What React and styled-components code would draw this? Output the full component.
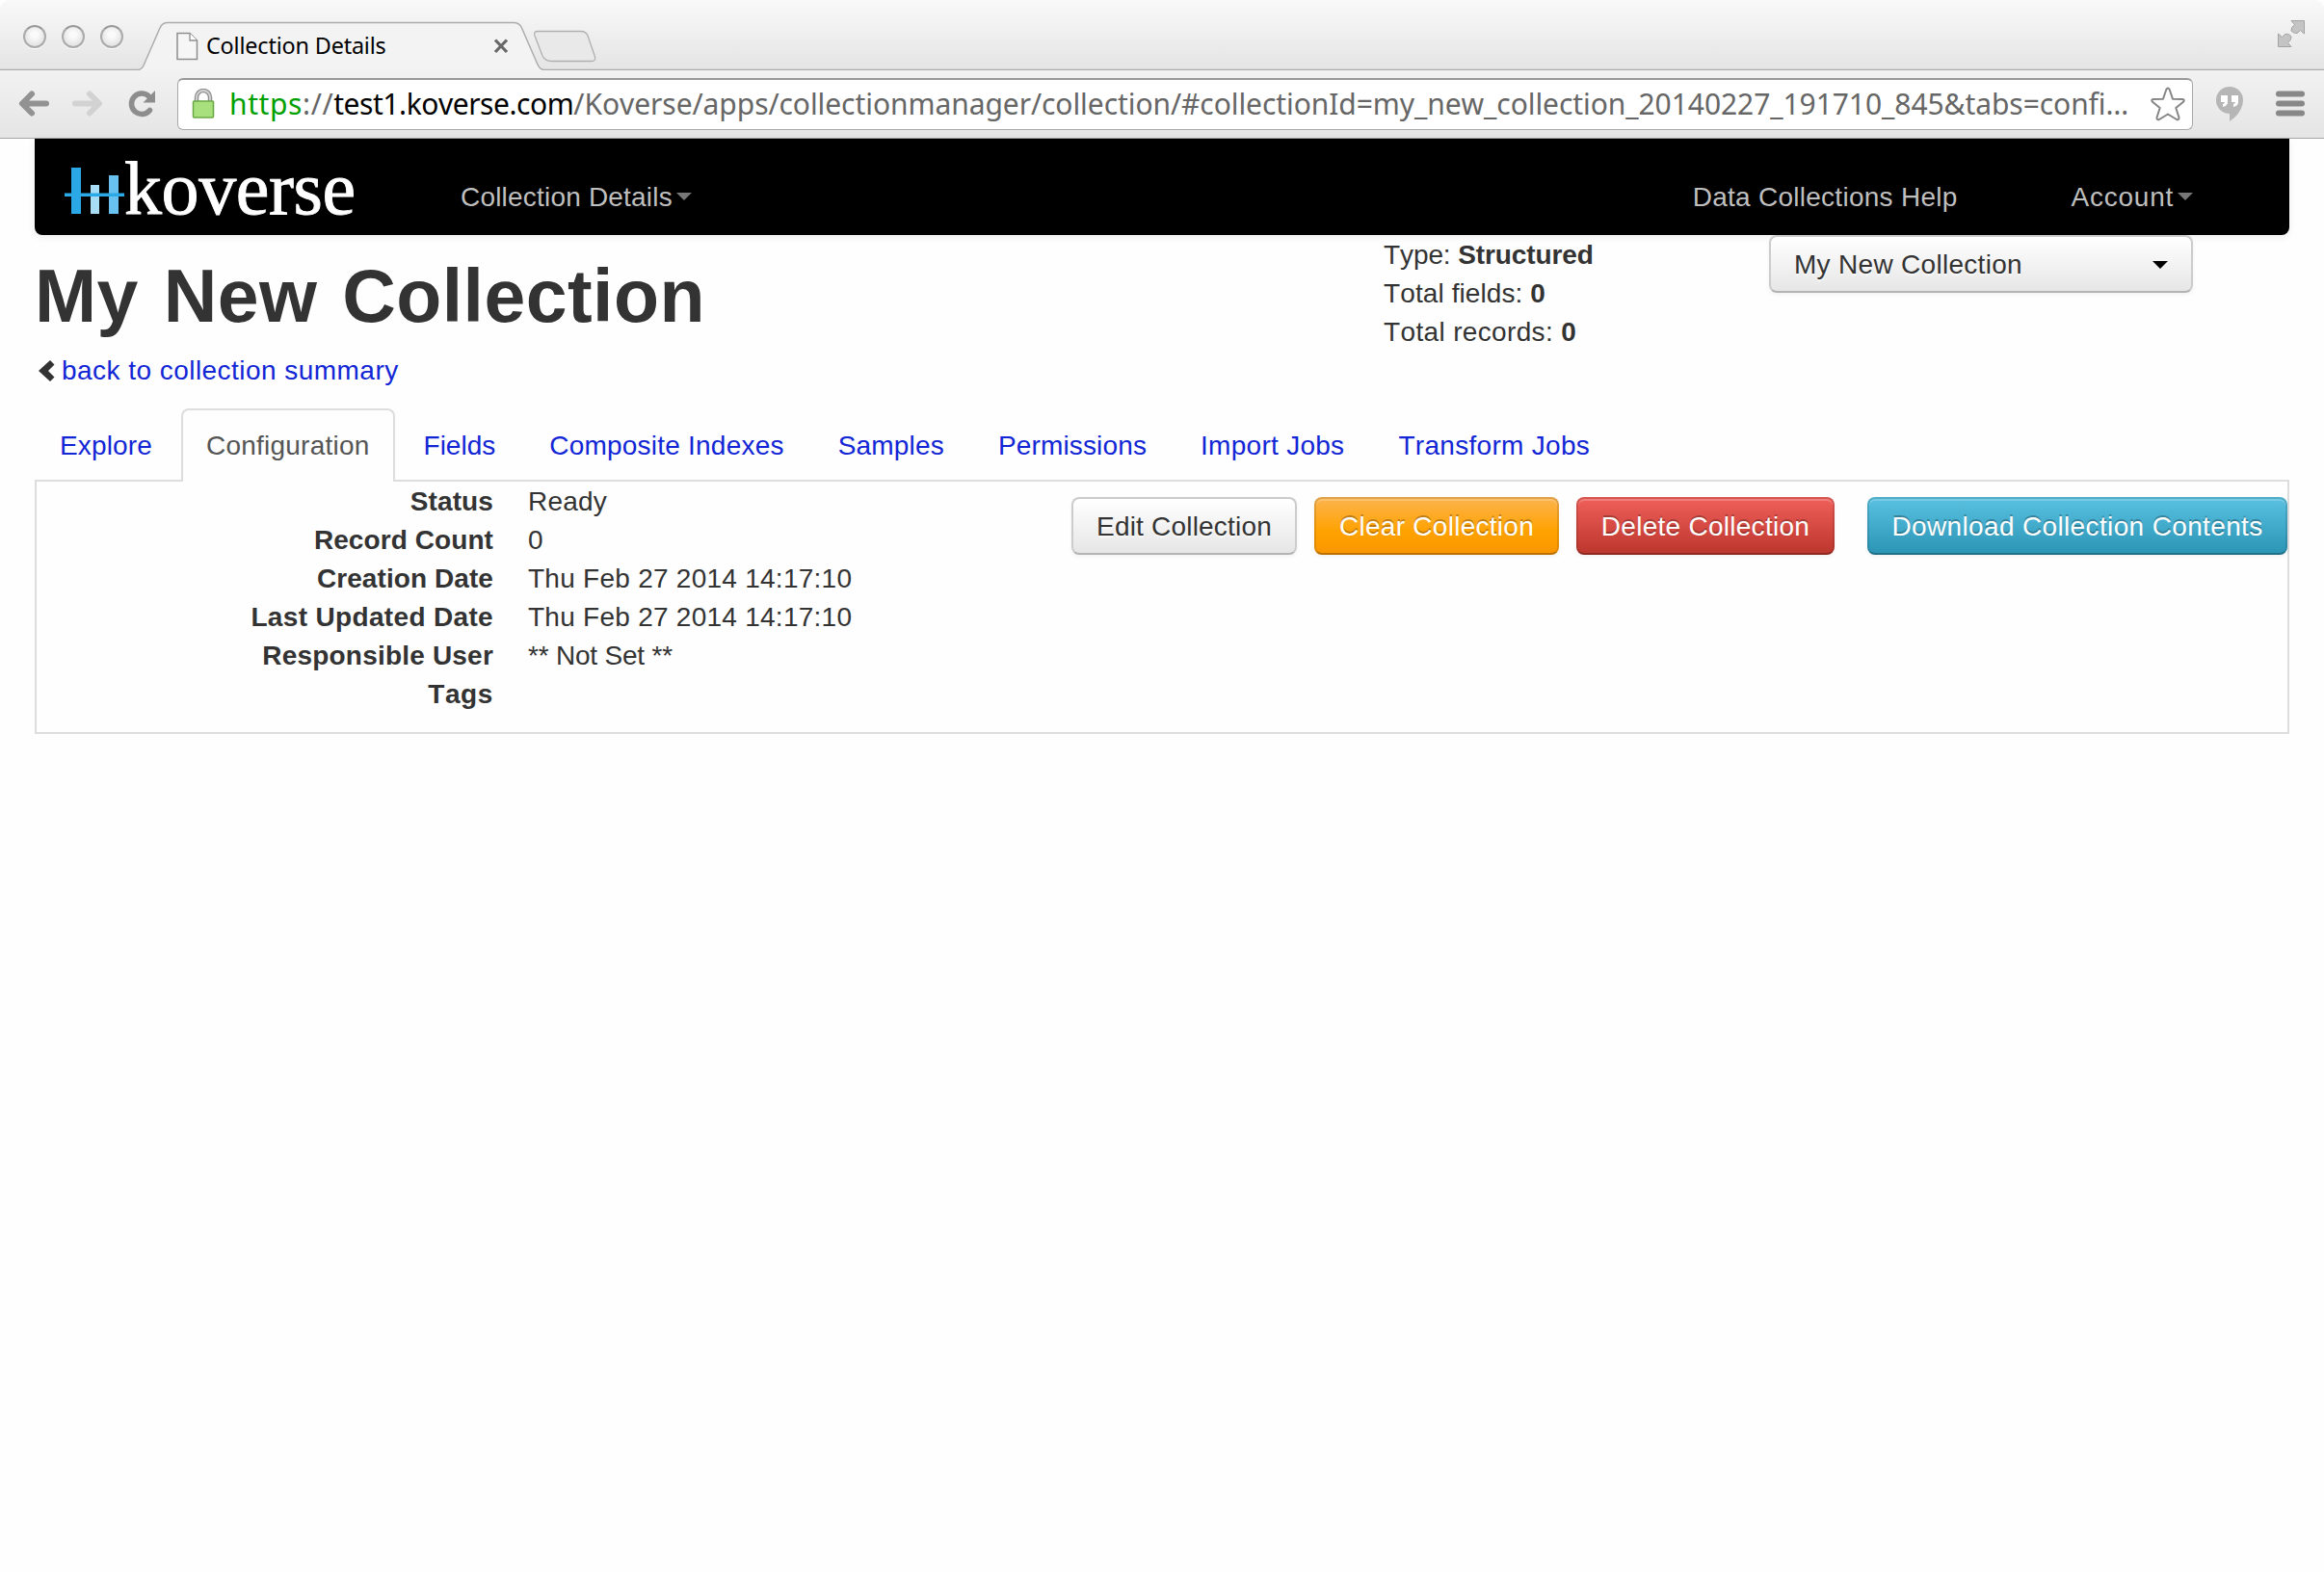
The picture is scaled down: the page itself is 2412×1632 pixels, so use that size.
import React from "react";
import styled, { createGlobalStyle, css } from "styled-components";

const Global = createGlobalStyle`
  * { box-sizing: border-box; }
  html, body { margin: 0; background: #fff; }
  body { font: 28px/40px "Liberation Sans", Arial, sans-serif; color: #333; overflow: hidden; font-kerning: none; }
`;

const Window = styled.div`
  width: 2412px;
  height: 1632px;
  background: #fefefe;
`;

const Tracked = styled.span`
  letter-spacing: ${(p) => p.$track}px;
`;

const Chrome = styled.header`
  height: 144px;
  border-radius: 10px 10px 0 0;
  border-bottom: 1px solid #a5a5a5;
  background: linear-gradient(#f2f2f2 72px, #e5e5e5 143px);
  font-family: "Noto Sans", "Open Sans", sans-serif;
`;

const TitleBar = styled.div`
  position: relative;
  height: 73px;
  display: flex;
  align-items: flex-start;
  border-radius: 10px 10px 0 0;
  background: linear-gradient(#f9f9f9, #e4e4e4);
`;

const TabShape = styled.svg`
  position: absolute;
  left: 0;
  top: 0;
`;

const Lights = styled.div`
  display: flex;
  gap: 16px;
  padding: 26px 0 0 24px;
  width: 183px;
`;

const Light = styled.i`
  width: 24px;
  height: 24px;
  border-radius: 50%;
  border: 2px solid #aaa;
  border-top-color: #999;
  background: radial-gradient(circle at 50% 40%, #fafafa 20%, #e2e2e2 75%);
  box-shadow: 0 1px 0 #fff;
`;

const TabLabel = styled.div`
  position: relative;
  display: flex;
  width: 345px;
  padding-top: 33px;
  svg { flex: none; }
`;

const TabTitle = styled.span`
  flex: 1;
  margin-left: 8px;
  margin-top: -1px;
  font-size: 23.4px;
  line-height: 30px;
  letter-spacing: -0.17px;
  color: #000;
  white-space: nowrap;
`;

const FullScreen = styled.svg`
  position: relative;
  margin: 20px 19px 0 auto;
`;

const Toolbar = styled.div`
  height: 69px;
  display: flex;
  align-items: center;
  padding: 0 19px 0 18px;
`;

const Omnibox = styled.div`
  display: flex;
  align-items: center;
  width: 2092px;
  height: 54px;
  margin: 0 22px 0 19px;
  padding: 0 6px 0 14px;
  background: #fff;
  border: 1px solid #a9a9a9;
  border-top: 2px solid #999;
  border-radius: 6px;
`;

const Url = styled.span`
  flex: 1;
  margin-left: 15px;
  font-size: 30px;
  line-height: 48px;
  white-space: nowrap;
  color: #666;
  letter-spacing: -0.07px;
  b { font-weight: 400; color: #000; letter-spacing: -0.45px; }
  em { font-style: normal; color: #00a000; }
`;

const Page = styled.main`
  padding: 0 36px;
`;

const Navbar = styled.nav`
  display: flex;
  height: 100px;
  padding: 0 100px 0 30px;
  background: #000;
  border-radius: 0 0 8px 8px;
  box-shadow: 0 2px 8px rgba(0, 0, 0, 0.07);
`;

const Brand = styled.div`
  display: flex;
  width: 412px;
`;

const BrandName = styled.span`
  margin-left: -1px;
  font: 78px/100px "Liberation Serif", serif;
  color: #fff;
  -webkit-text-stroke: 0.9px #fff;
  margin-top: 2px;
  letter-spacing: -0.4px;
`;

const NavItem = styled.a`
  display: flex;
  align-items: center;
  height: 40px;
  margin-top: 41px;
  color: #bfbfbf;
  white-space: nowrap;
  ${(p) => p.$push && css`margin-left: auto; margin-right: 118px;`}
`;

const Caret = styled.i`
  width: 16px;
  height: 8px;
  margin-left: ${(p) => p.$gap || 0}px;
  margin-top: ${(p) => p.$gap ? -2 : 0}px;
  background: ${(p) => p.$color};
  clip-path: polygon(0 0, 100% 0, 50% 100%);
`;

const Head = styled.section`
  display: flex;
  height: 180px;
`;

const HeadMain = styled.div`
  width: 1400px;
`;

const Title = styled.h1`
  margin: 23px 0 18px;
  font-size: 77px;
  line-height: 80px;
  letter-spacing: 0.45px;
  word-spacing: 4px;
`;

const BackLink = styled.a`
  display: flex;
  align-items: center;
  color: #1226d6;
  letter-spacing: 0.46px;
  svg { margin: 0 7px 0 4px; }
`;

const Meta = styled.div`
  width: 400px;
  padding-top: 1px;
`;

const buttonFace = css`
  display: flex;
  align-items: center;
  height: 60px;
  padding: 2px 24px 0;
  border: 2px solid #ccc;
  border-bottom-color: #b3b3b3;
  border-radius: 8px;
  background: linear-gradient(#fff, #e6e6e6);
  box-shadow: inset 0 2px 0 rgba(255, 255, 255, 0.2), 0 2px 4px rgba(0, 0, 0, 0.05);
  color: #333;
  text-shadow: 0 2px 2px rgba(255, 255, 255, 0.75);
  font: 28px/40px "Liberation Sans", Arial, sans-serif;
  font-kerning: none;
  white-space: nowrap;
`;

const Picker = styled.button`
  ${buttonFace}
  width: 440px;
  justify-content: space-between;
  letter-spacing: 0.3px;
`;

const tones = {
  warning: ["#fbb450", "#ffa200 60%, #f99500"],
  danger: ["#f0605b", "#bb352c"],
  info: ["#5ac1e1", "#2a94b4"],
};

const Button = styled.button`
  ${buttonFace}
  justify-content: center;
  width: ${(p) => p.$width}px;
  padding-left: 0;
  padding-right: 0;
  letter-spacing: ${(p) => p.$track}px;
  ${(p) => tones[p.$tone] && css`
    color: #fff;
    text-shadow: 0 -2px 0 rgba(0, 0, 0, 0.25);
    border-color: rgba(0, 0, 0, 0.1) rgba(0, 0, 0, 0.1) rgba(0, 0, 0, 0.25);
    background: linear-gradient(${tones[p.$tone].join(", ")}) border-box;
  `}
`;

const Tabs = styled.div`
  display: flex;
  gap: 4px;
  height: 76px;
`;

const Tab = styled.a`
  height: 76px;
  padding: 17px 24px 0;
  border: 2px solid transparent;
  border-bottom: 0;
  border-radius: 8px 8px 0 0;
  color: #1226d6;
  white-space: nowrap;
  letter-spacing: ${(p) => p.$track}px;
  ${(p) => p.$active && css`
    position: relative;
    color: #555;
    background: #fefefe;
    border-color: #ddd;
  `}
`;

const Panel = styled.section`
  display: flex;
  justify-content: space-between;
  height: 264px;
  margin-top: -2px;
  border: 2px solid #ddd;
`;

const Details = styled.dl`
  display: grid;
  grid-template-columns: 474px auto;
  grid-auto-rows: 40px;
  column-gap: 36px;
  margin: 0;
  padding-top: 1px;
  dt { font-weight: 700; text-align: right; }
  dd { margin: 0; }
`;

const Actions = styled.div`
  display: flex;
  gap: 18px;
  align-items: flex-start;
  padding-top: 16px;
  ${Button}:last-child { margin-left: 16px; }
`;

const tabs = [
  ["Explore", 0.15],
  ["Configuration", 0.23],
  ["Fields", 0],
  ["Composite Indexes", 0.22],
  ["Samples", 0.2],
  ["Permissions", 0.14],
  ["Import Jobs", 0.28],
  ["Transform Jobs", 0.3],
];

const details = [
  ["Status", 0.1, "Ready", 0.2],
  ["Record Count", 0.08, "0", 0],
  ["Creation Date", 0.08, "Thu Feb 27 2014 14:17:10", 0.26],
  ["Last Updated Date", 0.34, "Thu Feb 27 2014 14:17:10", 0.26],
  ["Responsible User", 0.2, "** Not Set **", -0.2],
  ["Tags", 0.6, "", 0],
];

const Arrow = ({ color, flip, left }) => (
  <svg width="34" height="36" viewBox="0 0 34 36" style={{ marginLeft: left }}>
    <g transform={flip ? "translate(34 0) scale(-1 1)" : undefined} fill="none" stroke={color} strokeWidth="6" strokeLinecap="round" strokeLinejoin="round">
      <path d="M15 7.500 5 17.500l10 10M6 17.500h24" />
    </g>
  </svg>
);

const BrowserChrome = () => (
  <Chrome>
    <TitleBar>
      <TabShape width="2412" height="73">
        <path d="M0 72.5H143Q147 72.5 149 68L166 29Q168.500 23.500 174 23.500H533Q539 23.500 541.500 29L558 67Q560.500 72.500 565 72.500H2412V74H0Z" fill="#f3f3f3" />
        <path d="M0 72.500H143Q147 72.500 149 68L166 29Q168.500 23.500 174 23.500H533Q539 23.500 541.500 29L558 67Q560.500 72.500 565 72.500H2412" fill="none" stroke="#acacac" strokeWidth="1.500" />
        <path d="M558 32.500H603Q608 32.500 610 37L617.500 59Q618.500 63.500 614 63.500H572Q566 63.500 563 58L555 37Q553.500 32.500 558 32.500Z" fill="#e9e9e9" stroke="#b0b0b0" strokeWidth="1.300" />
      </TabShape>
      <Lights><Light /><Light /><Light /></Lights>
      <TabLabel>
        <svg width="23" height="30" viewBox="0 0 23 30">
          <path d="M1 1.500H14L21.500 9V28.500H1Z" fill="#f6f6f6" stroke="#8e8e8e" strokeWidth="1.500" />
          <path d="M14 1.500V9H21.500" fill="#fff" stroke="#8e8e8e" strokeWidth="1.300" />
        </svg>
        <TabTitle>Collection Details</TabTitle>
        <svg width="16" height="30" viewBox="0 0 16 30">
          <path d="M2 8.500 14 21M14 8.500 2 21" stroke="#686868" strokeWidth="3.200" />
        </svg>
      </TabLabel>
      <FullScreen width="30" height="30" viewBox="0 0 30 30" fill="#c4c4c4" stroke="#a3a3a3" strokeWidth="1">
        <path d="M15 1.500H28.500V15L24.500 11.500 21 14.500Q17 14.500 15 12Q14.500 9 18.500 5.500Z" />
        <path d="M1.500 15 5.500 18.500 8.500 15.500Q13 14.500 15 18Q15.500 21 11.500 24.500L15 28.500H1.500Z" />
      </FullScreen>
    </TitleBar>
    <Toolbar>
      <Arrow color="#929292" />
      <Arrow color="#d2d2d2" flip left={22} />
      <svg width="36" height="36" viewBox="0 0 36 36" style={{ marginLeft: 21 }}>
        <path d="M26.500 24.500A10.700 10.700 0 1 1 25.500 10" fill="none" stroke="#8d8d8d" strokeWidth="5.500" strokeLinecap="round" />
        <path d="M32 4V16.500H19.500Z" fill="#8d8d8d" />
      </svg>
      <Omnibox>
        <svg width="24" height="32" viewBox="0 0 24 32">
          <path d="M5 14V9a7 7 0 0 1 14 0V14" fill="none" stroke="#8f8f8f" strokeWidth="4.500" />
          <path d="M5 14V9a7 7 0 0 1 14 0V14" fill="none" stroke="#d5d5d5" strokeWidth="1.800" />
          <rect x="1.500" y="13" width="21" height="17" rx="1" fill="#a9e07e" stroke="#69a943" strokeWidth="1.500" />
        </svg>
        <Url><Tracked $track={0.6}><em>https</em>://</Tracked><b>test1.koverse.com</b>/Koverse/apps/collectionmanager/collection/#collectionId=my_new_collection_20140227_191710_845&amp;tabs=confi…</Url>
        <svg width="38" height="38" viewBox="0 0 38 38">
          <path d="M17.300 4Q19 .800 20.700 4L24 13.800 34 14Q37 14.500 35 16.800L27.300 23 30.500 33Q30.700 36 28 35L19 29.500 10 35Q7.300 36 7.500 33L10.700 23 3 16.800Q1 14.500 4 14L14 13.800Z" fill="#fff" stroke="#858585" strokeWidth="2" strokeLinejoin="round" />
        </svg>
      </Omnibox>
      <svg width="32" height="40" viewBox="0 0 32 40">
        <path d="M16 2A14 14 0 1 1 16 30A14 14 0 1 1 16 2Z" fill="#b6b6b6" />
        <path d="M16 28V38Q27 31 29.500 20Z" fill="#b6b6b6" />
        <path d="M7 11h7v7q0 4-5 5v-3q2-.500 2-2H7ZM18 11h7v7q0 4-5 5v-3q2-.500 2-2H18Z" fill="#fff" />
      </svg>
      <svg width="32" height="36" viewBox="0 0 32 36" style={{ marginLeft: "auto" }}>
        <path d="M4 7.500H28M4 17.500H28M4 27.500H28" stroke="#888" strokeWidth="6" strokeLinecap="round" />
      </svg>
    </Toolbar>
  </Chrome>
);

export default function App() {
  return (
    <Window>
      <Global />
      <BrowserChrome />
      <Page>
        <Navbar>
          <Brand>
            <svg width="64" height="100" viewBox="0 0 64 100">
              <path d="M8 30h10v48H8Z" fill="#2ba9e6" />
              <path d="M28 48h9v30h-9Z" fill="#a9dcf5" />
              <path d="M47 38h10v40H47Z" fill="#69c1ef" />
              <path d="M1 56.500h62v3.500H1Z" fill="#2ba9e6" />
            </svg>
            <BrandName>koverse</BrandName>
          </Brand>
          <NavItem><Tracked $track={0.2}>Collection Details</Tracked><Caret $color="#777" $gap={4} /></NavItem>
          <NavItem $push><Tracked $track={0.27}>Data Collections Help</Tracked></NavItem>
          <NavItem><Tracked $track={0.75}>Account</Tracked><Caret $color="#777" $gap={4} /></NavItem>
        </Navbar>
        <Head>
          <HeadMain>
            <Title>My New Collection</Title>
            <BackLink>
              <svg width="17" height="24" viewBox="0 0 17 24">
                <path d="M12 1 16.500 5.500 10 12 16.500 18.500 12 23 0 12Z" fill="#333" />
              </svg>
              back to collection summary
            </BackLink>
          </HeadMain>
          <Meta>
            <div><Tracked $track={-0.1}>Type: <b>Structured</b></Tracked></div>
            <div><Tracked $track={0.1}>Total fields: <b>0</b></Tracked></div>
            <div><Tracked $track={0.35}>Total records: <b>0</b></Tracked></div>
          </Meta>
          <Picker>My New Collection<Caret $color="#000" /></Picker>
        </Head>
        <Tabs>
          {tabs.map(([name, track]) => (
            <Tab key={name} $track={track} $active={name === "Configuration"}>{name}</Tab>
          ))}
        </Tabs>
        <Panel>
          <Details>
            {details.map(([label, labelTrack, value, valueTrack]) => (
              <React.Fragment key={label}>
                <dt><Tracked $track={labelTrack}>{label}</Tracked></dt>
                <dd><Tracked $track={valueTrack}>{value}</Tracked></dd>
              </React.Fragment>
            ))}
          </Details>
          <Actions>
            <Button $width={234} $track={0.2}>Edit Collection</Button>
            <Button $width={254} $track={0.28} $tone="warning">Clear Collection</Button>
            <Button $width={268} $track={0.27} $tone="danger">Delete Collection</Button>
            <Button $width={436} $track={0.36} $tone="info">Download Collection Contents</Button>
          </Actions>
        </Panel>
      </Page>
    </Window>
  );
}
